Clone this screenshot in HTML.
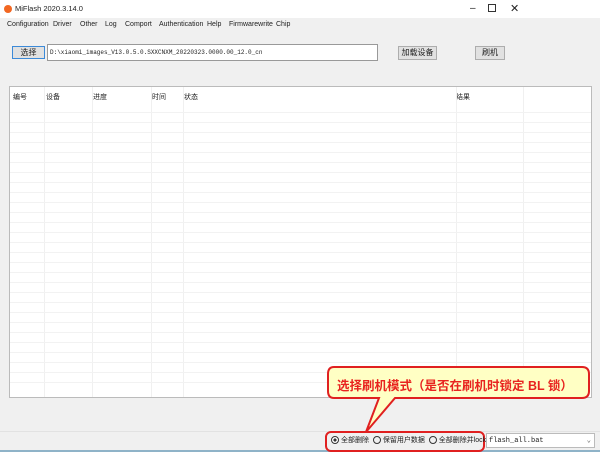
<!DOCTYPE html>
<html><head><meta charset="utf-8"><style>
*{margin:0;padding:0;box-sizing:border-box}
body{width:600px;height:452px;background:#f0f0f0;font-family:"Liberation Sans","Noto Sans CJK SC",sans-serif;font-size:8px;color:#222;position:relative;overflow:hidden}
.abs{position:absolute}
.title{left:0;top:0;width:600px;height:18px;background:#fff}
.menu{left:0;top:18px;width:600px;height:14px;background:#f0f0f0}
.menu span{position:absolute;top:3px;font-size:7px}
.btn{background:#e1e1e1;border:1px solid #adadad;text-align:center;line-height:12px}
.tbl{left:9px;top:86px;width:583px;height:312px;background:#fff;border:1px solid #bbb;overflow:hidden}
.vl{position:absolute;top:0;bottom:0;width:1px;background:#f0f0f0}
.hl{position:absolute;left:0;right:0;height:1px;background:#f2f2f2}
.h{position:absolute;top:5px;font-size:7px}
</style></head><body>
<div class="abs title">
 <div class="abs" style="left:4px;top:5px;width:8px;height:8px;border-radius:50%;background:#f26722"></div>
 <div class="abs" style="left:15px;top:4px;font-size:7.5px">MiFlash 2020.3.14.0</div>
 <div class="abs" style="left:470px;top:3px;font-size:10px">–</div>
 <div class="abs" style="left:488px;top:4px;width:8px;height:8px;border:1px solid #333"></div>
 <div class="abs" style="left:510px;top:2px;font-size:11px">✕</div>
</div>
<div class="abs menu"><span style="left:7px">Configuration</span><span style="left:53px">Driver</span><span style="left:80px">Other</span><span style="left:105px">Log</span><span style="left:125px">Comport</span><span style="left:159px">Authentication</span><span style="left:207px">Help</span><span style="left:229px">Firmwarewrite</span><span style="left:276px">Chip</span></div>
<div class="abs btn" style="left:12px;top:46px;width:33px;height:13px;border-color:#3c8ad8">选择</div>
<div class="abs" style="left:47px;top:44px;width:331px;height:17px;background:#fff;border:1px solid #999;font-family:'Liberation Mono',monospace;font-size:6px;padding:4px 2px">D:\xiaomi_images_V13.0.5.0.SXXCNXM_20220323.0000.00_12.0_cn</div>
<div class="abs btn" style="left:398px;top:46px;width:39px;height:14px">加载设备</div>
<div class="abs btn" style="left:475px;top:46px;width:30px;height:14px">刷机</div>
<div class="abs tbl">
 <div class="h" style="left:3px">编号</div><div class="h" style="left:36px">设备</div><div class="h" style="left:83px">进度</div><div class="h" style="left:142px">时间</div><div class="h" style="left:174px">状态</div><div class="h" style="left:446px">结果</div>
 <div class="vl" style="left:34px"></div><div class="vl" style="left:82px"></div><div class="vl" style="left:141px"></div><div class="vl" style="left:173px"></div><div class="vl" style="left:446px"></div><div class="vl" style="left:513px"></div>
 <div class="hl" style="top:25px"></div><div class="hl" style="top:35px"></div><div class="hl" style="top:45px"></div><div class="hl" style="top:55px"></div><div class="hl" style="top:65px"></div><div class="hl" style="top:75px"></div><div class="hl" style="top:85px"></div><div class="hl" style="top:95px"></div><div class="hl" style="top:105px"></div><div class="hl" style="top:115px"></div><div class="hl" style="top:125px"></div><div class="hl" style="top:135px"></div><div class="hl" style="top:145px"></div><div class="hl" style="top:155px"></div><div class="hl" style="top:165px"></div><div class="hl" style="top:175px"></div><div class="hl" style="top:185px"></div><div class="hl" style="top:195px"></div><div class="hl" style="top:205px"></div><div class="hl" style="top:215px"></div><div class="hl" style="top:225px"></div><div class="hl" style="top:235px"></div><div class="hl" style="top:245px"></div><div class="hl" style="top:255px"></div><div class="hl" style="top:265px"></div><div class="hl" style="top:275px"></div><div class="hl" style="top:285px"></div><div class="hl" style="top:295px"></div>
</div>
<div class="abs" style="left:0;top:431px;width:600px;height:1px;background:#e2e2e2"></div>
<div class="abs" style="left:0;top:450px;width:600px;height:2px;background:#8fb3c8"></div>
<svg class="abs" style="left:0;top:0" width="600" height="452">
 <path d="M334 367 H582 Q589 367 589 374 V391 Q589 398 582 398 H395 L366 432 L379 398 H334 Q328 398 328 391 V374 Q328 367 334 367 Z" fill="#ffffc4" stroke="#e02020" stroke-width="2"/>
 <rect x="326" y="432" width="158" height="19" rx="5" fill="none" stroke="#e02020" stroke-width="2"/>
</svg>
<div class="abs" style="left:337px;top:375px;font-size:12.5px;font-weight:bold;color:#e8231f;white-space:nowrap">选择刷机模式（是否在刷机时锁定 BL 锁）</div>
<div class="abs" style="left:331px;top:436px;font-size:7px;white-space:nowrap;line-height:10px">
 <span style="display:inline-block;width:8px;height:8px;border:1px solid #333;border-radius:50%;vertical-align:middle;background:radial-gradient(#333 35%,#fff 40%)"></span> 全部删除
 <span style="display:inline-block;width:8px;height:8px;border:1px solid #333;border-radius:50%;vertical-align:middle;margin-left:2px"></span> 保留用户数据
 <span style="display:inline-block;width:8px;height:8px;border:1px solid #333;border-radius:50%;vertical-align:middle;margin-left:2px"></span> 全部删除并lock
</div>
<div class="abs" style="left:486px;top:433px;width:109px;height:15px;background:#fff;border:1px solid #bbb;font-family:'Liberation Mono',monospace;font-size:7px;padding:3px 2px">flash_all.bat<span style="position:absolute;right:3px;top:2px;font-size:7px;color:#555">⌄</span></div>
</body></html>
